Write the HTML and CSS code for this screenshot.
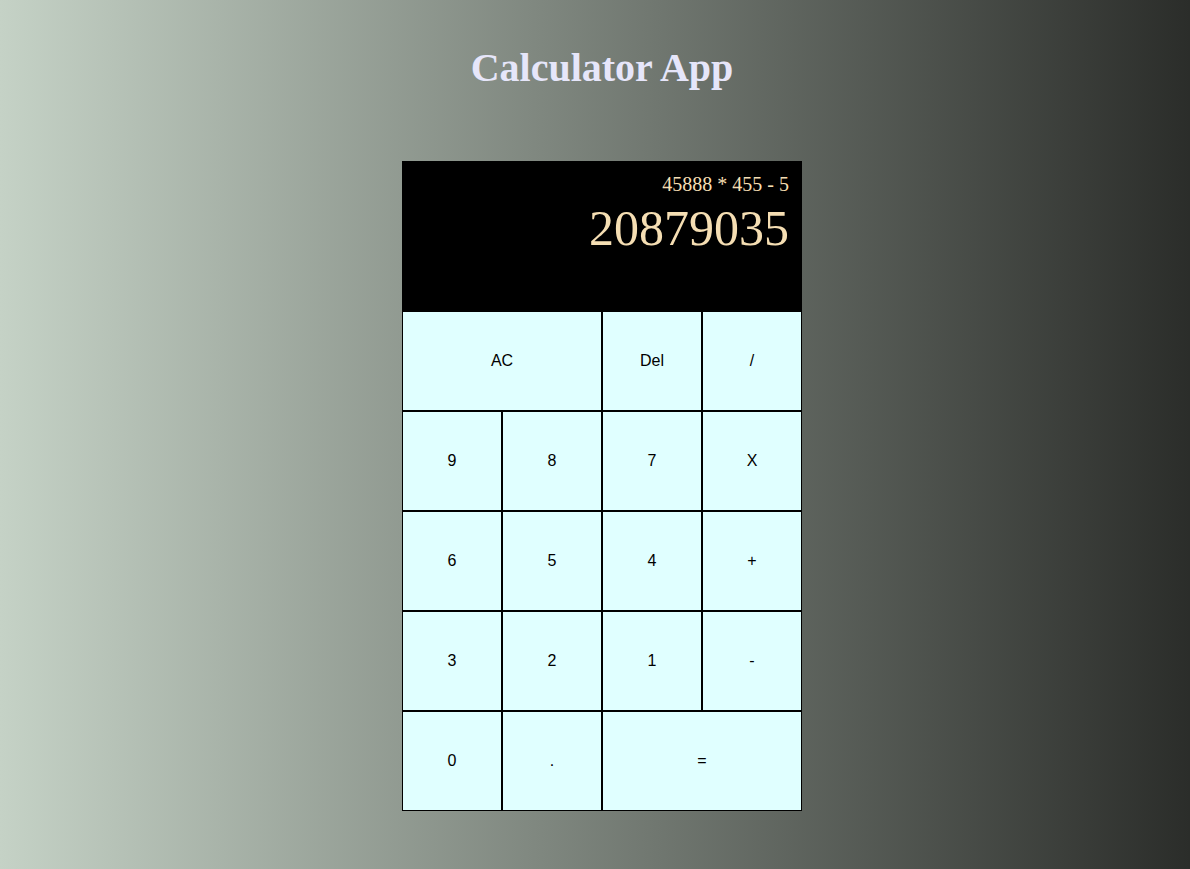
FILE: index.html
```html
<!DOCTYPE html>
<html lang="en">
<head>
<meta charset="UTF-8">
<title>Calculator App</title>
<link rel="stylesheet" href="styles.css">
</head>
<body>
<div class="page">
  <h1 class="title">Calculator App</h1>
  <div class="calculator">
    <div class="output">
      <div class="previous">45888 * 455 - 5</div>
      <div class="current">20879035</div>
    </div>
    <button class="key span-two">AC</button>
    <button class="key">Del</button>
    <button class="key">/</button>
    <button class="key">9</button>
    <button class="key">8</button>
    <button class="key">7</button>
    <button class="key">X</button>
    <button class="key">6</button>
    <button class="key">5</button>
    <button class="key">4</button>
    <button class="key">+</button>
    <button class="key">3</button>
    <button class="key">2</button>
    <button class="key">1</button>
    <button class="key">-</button>
    <button class="key">0</button>
    <button class="key">.</button>
    <button class="key span-two">=</button>
  </div>
</div>
</body>
</html>
```

FILE: styles.css
```css
* {
  box-sizing: border-box;
}

html, body {
  margin: 0;
  padding: 0;
}

body {
  min-height: 100vh;
  background: linear-gradient(to right, #c5d2c6, #2b2d2a);
  font-family: "Liberation Serif", "Times New Roman", serif;
}

.page {
  display: flex;
  flex-direction: column;
  align-items: center;
  padding: 44px 0 0 14px;
}

.title {
  margin: 0 0 70px 0;
  font-size: 40px;
  font-weight: bold;
  line-height: normal;
  color: #e6e6fa;
}

.calculator {
  display: grid;
  grid-template-columns: repeat(4, 100px);
  grid-template-rows: 150px repeat(5, 100px);
}

.output {
  grid-column: 1 / -1;
  background: #000;
  display: flex;
  flex-direction: column;
  align-items: flex-end;
  padding: 12px 13px 12px 12px;
  color: #f5deb3;
  word-break: break-all;
}

.previous {
  font-size: 20px;
  line-height: 23px;
}

.current {
  font-size: 50px;
  line-height: 57px;
  margin-top: 4px;
}

.key {
  margin: 0;
  padding: 0;
  border: 1px solid #000;
  border-radius: 0;
  background: #e0ffff;
  color: #000;
  font-family: "Liberation Sans", Arial, sans-serif;
  font-size: 16px;
  cursor: pointer;
}

.span-two {
  grid-column: span 2;
}
```
